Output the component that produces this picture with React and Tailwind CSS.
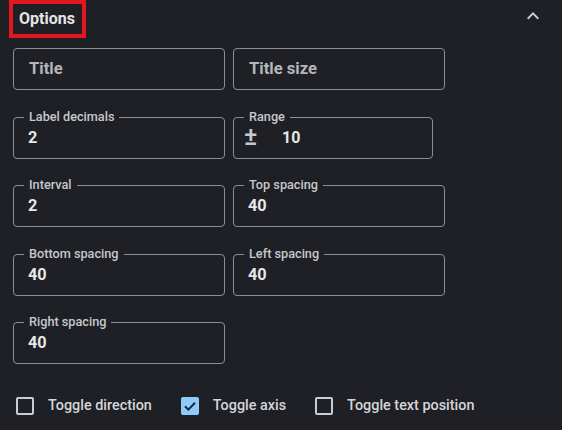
import { useState } from "react";

const fieldRows = [
  [
    { key: "title", placeholder: "Title" },
    { key: "titleSize", placeholder: "Title size" },
  ],
  [
    { key: "labelDecimals", label: "Label decimals", value: "2" },
    { key: "range", label: "Range", value: "10", prefix: "±", narrow: true },
  ],
  [
    { key: "interval", label: "Interval", value: "2" },
    { key: "topSpacing", label: "Top spacing", value: "40" },
  ],
  [
    { key: "bottomSpacing", label: "Bottom spacing", value: "40" },
    { key: "leftSpacing", label: "Left spacing", value: "40" },
  ],
  [{ key: "rightSpacing", label: "Right spacing", value: "40" }],
];

const rowMargins = ["mt-[10px]", "mt-[27px]", "mt-[26px]", "mt-[27px]", "mt-[26px]"];

function Field({ field }) {
  return (
    <div
      className={`relative h-[42px] rounded-[4px] border border-[#8b8e93] flex items-center ${
        field.narrow ? "w-[200px]" : "w-[212px]"
      }`}
    >
      {field.label && (
        <span className="absolute left-[10px] top-[-1px] -translate-y-1/2 px-[5px] bg-[#1e2025] text-[12.7px] leading-none font-medium text-[#c6c8cc]">
          {field.label}
        </span>
      )}
      {field.placeholder ? (
        <span className="pl-[15px] text-[16.6px] font-bold text-[#b4b6ba]">
          {field.placeholder}
        </span>
      ) : field.prefix ? (
        <div className="flex items-center pl-[10px]">
          <span className="w-[38px] text-[25px] leading-none font-medium text-[#c6c8cc] -mt-[3px]">
            {field.prefix}
          </span>
          <span className="text-[16px] font-bold text-[#e6e7e9]">
            {field.value}
          </span>
        </div>
      ) : (
        <span className="pl-[14px] text-[16.3px] font-bold text-[#e6e7e9]">
          {field.value}
        </span>
      )}
    </div>
  );
}

function Check({ checked, label, onToggle }) {
  return (
    <button
      type="button"
      onClick={onToggle}
      className="flex items-center gap-[14px] cursor-pointer"
    >
      {checked ? (
        <span className="w-[18px] h-[18px] rounded-[2px] bg-[#90caf9] flex items-center justify-center">
          <svg width="14" height="14" viewBox="0 0 14 14" fill="none">
            <path
              d="M2 7.2 L5.4 10.6 L12 3.8"
              stroke="#102a43"
              strokeWidth="2"
            />
          </svg>
        </span>
      ) : (
        <span className="w-[18px] h-[18px] rounded-[2px] border-2 border-[#c9ccd1]" />
      )}
      <span className="text-[14.4px] font-medium text-[#d4d6d9]">{label}</span>
    </button>
  );
}

export default function App() {
  const [toggles, setToggles] = useState({
    direction: false,
    axis: true,
    textPosition: false,
  });

  const flip = (k) => setToggles((prev) => ({ ...prev, [k]: !prev[k] }));

  return (
    <div
      className="w-[562px] h-[430px] bg-[#1e2025] overflow-hidden"
      style={{ fontFamily: "Roboto, 'Noto Sans', sans-serif" }}
    >
      <div className="flex items-start justify-between">
        <div className="ml-[9px] w-[77px] h-[38px] border-4 border-[#e3171f] flex items-center pl-[6px]">
          <span className="text-[16px] font-bold text-[#e3e4e6] -mt-[1px]">
            Options
          </span>
        </div>
        <svg
          className="mr-[17px] mt-[4px]"
          width="24"
          height="24"
          viewBox="0 0 24 24"
          fill="#c9ccd1"
        >
          <path d="m12 8-6 6 1.41 1.41L12 10.83l4.59 4.58L18 14z" />
        </svg>
      </div>

      <div className="pl-[13px]">
        {fieldRows.map((row, i) => (
          <div key={i} className={`flex gap-[8px] ${rowMargins[i]}`}>
            {row.map((f) => (
              <Field key={f.key} field={f} />
            ))}
          </div>
        ))}
      </div>

      <div className="flex items-center gap-[29px] pl-[16px] mt-[31px]">
        <Check
          checked={toggles.direction}
          label="Toggle direction"
          onToggle={() => flip("direction")}
        />
        <Check
          checked={toggles.axis}
          label="Toggle axis"
          onToggle={() => flip("axis")}
        />
        <Check
          checked={toggles.textPosition}
          label="Toggle text position"
          onToggle={() => flip("textPosition")}
        />
      </div>
    </div>
  );
}
